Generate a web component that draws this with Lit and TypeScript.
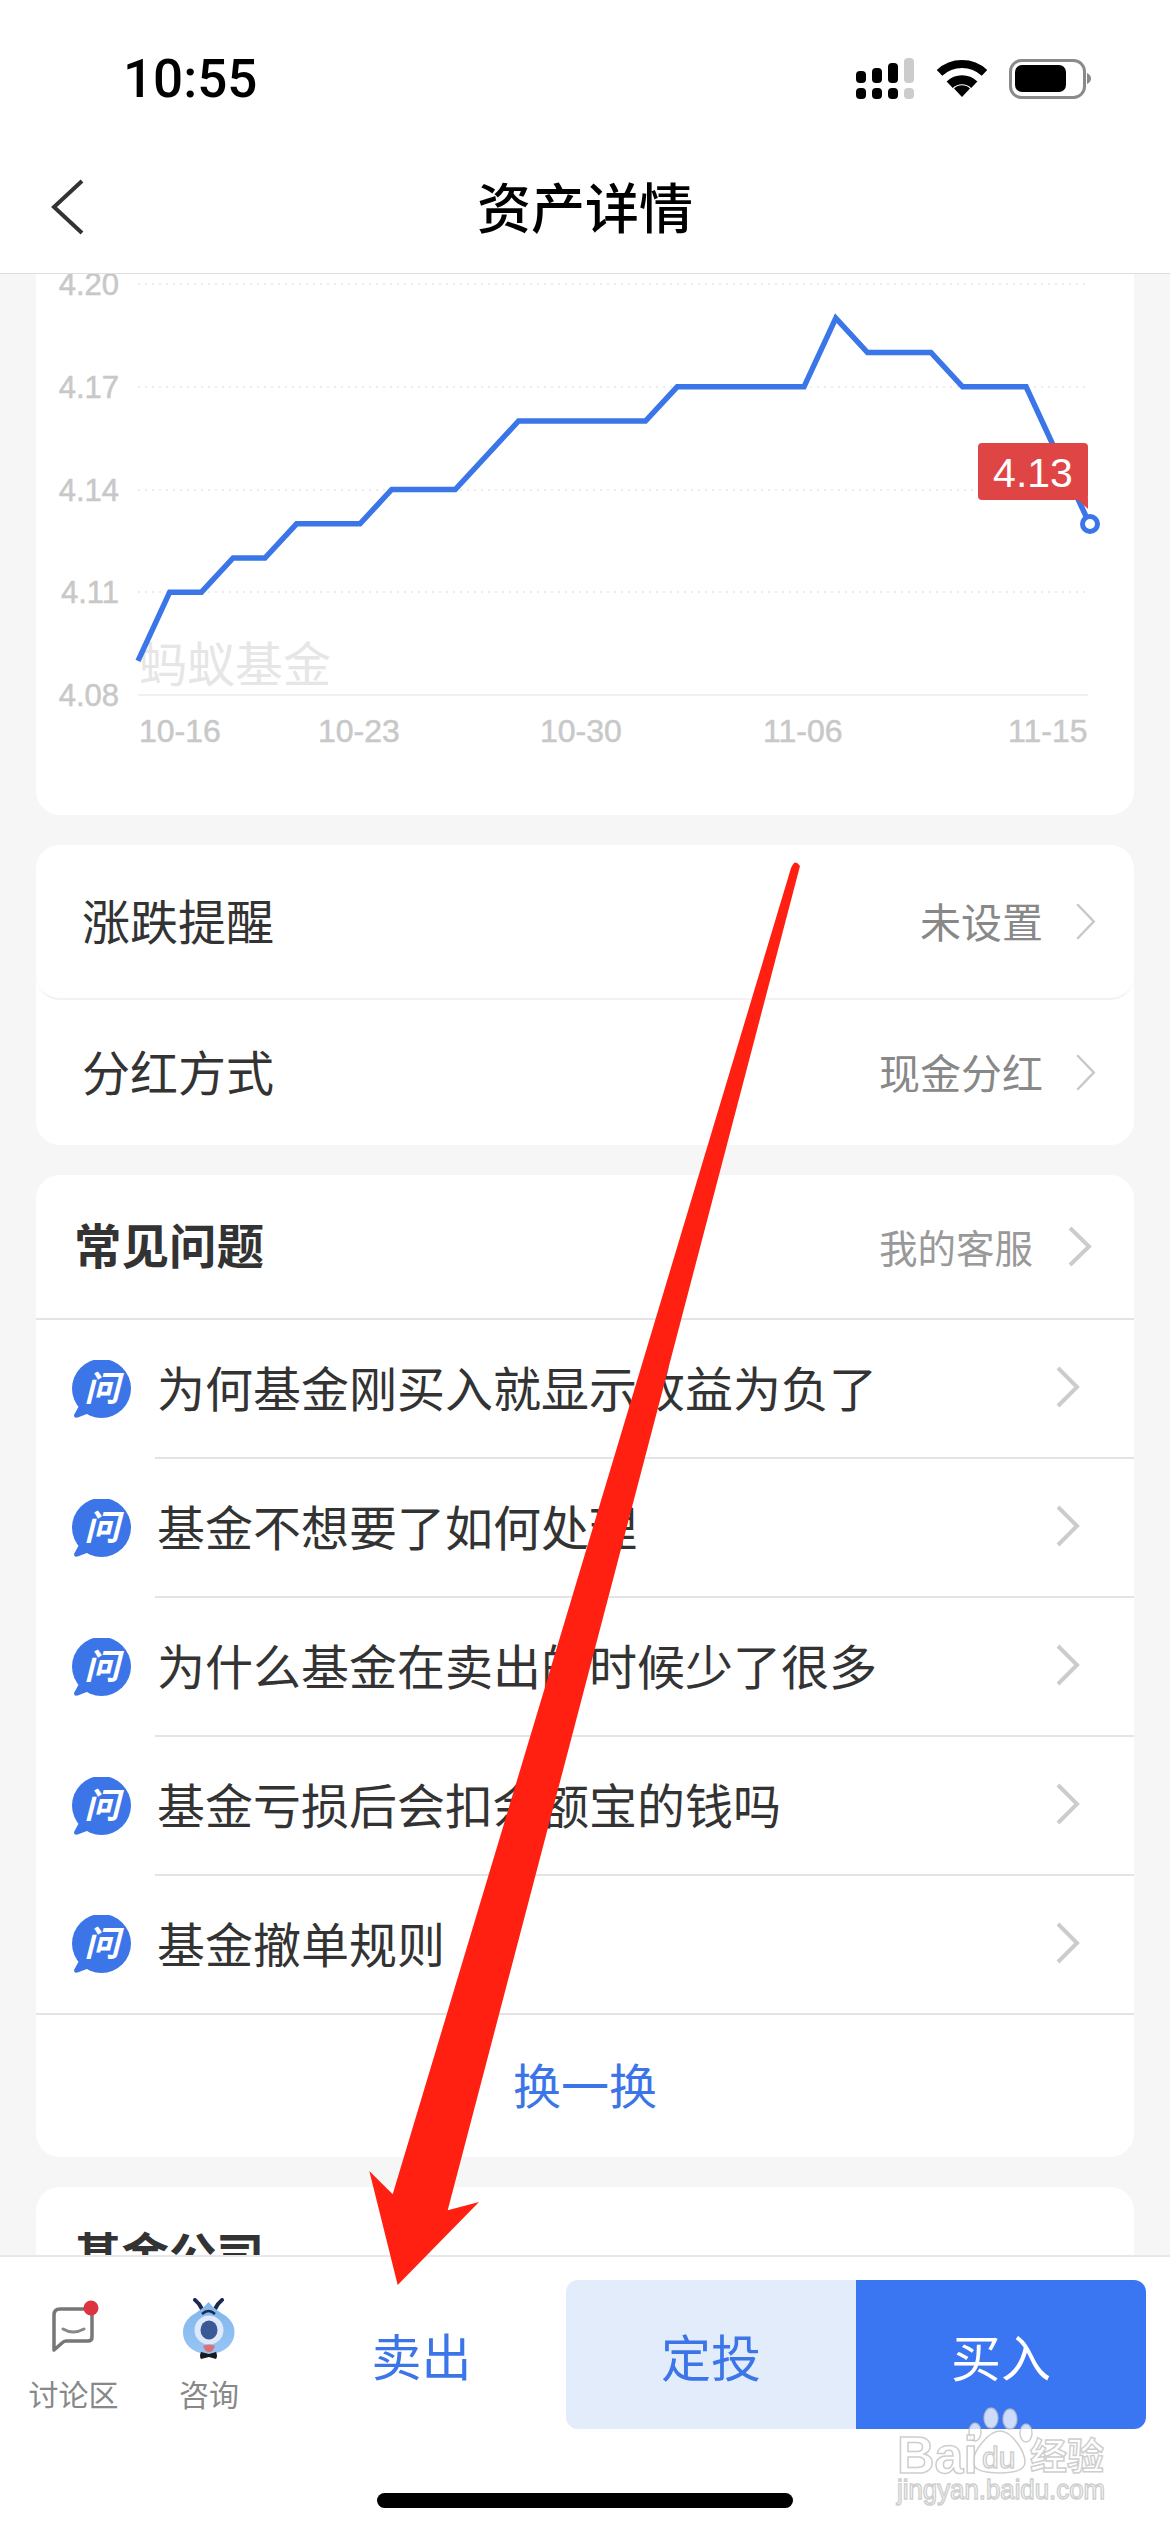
import { LitElement, html, css, svg } from "lit";
import { customElement } from "lit/decorators.js";

const STEP = 951.5 / 30;
const px = (i: number) => 138 + i * STEP;
const py = (v: number) => 695 - (v - 4.08) * (411 / 0.12);
const POINTS: [number, number][] = [
  [0, 4.09], [1, 4.11], [2, 4.11], [3, 4.12], [4, 4.12], [5, 4.13], [7, 4.13], [8, 4.14], [10, 4.14],
  [12, 4.16], [16, 4.16], [17, 4.17], [21, 4.17], [22, 4.19], [23, 4.18], [25, 4.18], [26, 4.17], [28, 4.17], [30, 4.13],
];
const Y_LABELS: [string, number][] = [["4.20", 284], ["4.17", 387], ["4.14", 490], ["4.11", 592], ["4.08", 695]];
const X_LABELS: [string, number][] = [["10-16", 139], ["10-23", 318], ["10-30", 540], ["11-06", 763], ["11-15", 1008]];
const QUESTIONS = [
  "为何基金刚买入就显示收益为负了",
  "基金不想要了如何处理",
  "为什么基金在卖出的时候少了很多",
  "基金亏损后会扣余额宝的钱吗",
  "基金撤单规则",
];

const chevron = (w: number, h: number, sw: number, color: string) => html`
  <svg class="chev" width=${w} height=${h} viewBox="0 0 ${w} ${h}">
    <path d="M${sw / 2 + 1} ${sw / 2} L${w - sw / 2 - 1} ${h / 2} L${sw / 2 + 1} ${h - sw / 2}" fill="none" stroke=${color} stroke-width=${sw}></path>
  </svg>`;

@customElement("app-root")
export class AppRoot extends LitElement {
  static styles = css`
    :host {
      display: flex;
      flex-direction: column;
      position: relative;
      width: 1170px;
      height: 2532px;
      overflow: hidden;
      background: #f6f6f6;
      color: #333;
      font-family: "Noto Sans CJK SC", "Liberation Sans", sans-serif;
    }
    svg { display: block; flex: none; }
    .header { flex: none; height: 274px; background: #fff; border-bottom: 1px solid #dedede; box-sizing: border-box; }
    .status { height: 155px; display: flex; align-items: center; padding: 2px 79px 0 123px; box-sizing: border-box; justify-content: space-between; }
    .time { font: 500 53px/60px Roboto, sans-serif; color: #000; }
    .nav { height: 104px; display: grid; grid-template-columns: 1fr auto 1fr; align-items: center; padding: 0 51px; }
    .title { font-size: 54px; line-height: 70px; font-weight: 500; color: #000; padding-bottom: 2px; }
    .content { flex: 1; min-height: 0; overflow: hidden; padding: 0 36px; display: flex; flex-direction: column; gap: 30px; }
    .card { flex: none; background: #fff; border-radius: 24px; }
    .chart { height: 541px; border-radius: 0 0 24px 24px; overflow: hidden; }
    .chart text { font-family: "Liberation Sans", sans-serif; }
    .setting { height: 155px; display: flex; align-items: center; padding: 0 38px 0 46px; font-size: 48px; box-sizing: border-box; }
    .setting.first { border-bottom: 2px solid #f2f2f2; border-radius: 24px; }
    .setting.second { height: 145px; }
    .setting .label { flex: 1; padding-bottom: 6px; }
    .setting .value { font-size: 41px; color: #888; margin-right: 32px; padding-bottom: 4px; }
    .faq-head { height: 145px; display: flex; align-items: center; padding: 0 42px 0 38px; border-bottom: 2px solid #e4e4e4; box-sizing: border-box; }
    .faq-title { flex: 1; font-size: 47.500px; font-weight: 700; padding-bottom: 6px; }
    .faq-link { font-size: 38.500px; color: #999; margin-right: 34px; padding-bottom: 2px; }
    .q { height: 139px; display: flex; align-items: stretch; padding-left: 36px; box-sizing: border-box; }
    .q.last { border-bottom: 2px solid #e4e4e4; }
    .q-icon { align-self: center; margin-right: 23px; }
    .q-body { flex: 1; display: flex; align-items: center; padding: 0 54px 0 2px; border-bottom: 2px solid #e4e4e4; font-size: 48px; box-sizing: border-box; }
    .q.last .q-body { border-bottom: 0; }
    .q-text { flex: 1; white-space: nowrap; padding-bottom: 6px; }
    .q-body .chev { margin-bottom: 3px; }
    .more { height: 142px; display: flex; align-items: center; justify-content: center; color: #3b75e8; font-size: 48px; padding-bottom: 6px; box-sizing: border-box; }
    .company { height: 200px; padding: 36px 38px; font-size: 47.500px; font-weight: 700; line-height: 60px; box-sizing: border-box; }
    .bottom { flex: none; height: 277px; background: #fff; border-top: 2px solid #e8e8e8; box-sizing: border-box; display: flex; flex-direction: column; }
    .actions { display: flex; align-items: flex-start; padding-left: 30px; }
    .tool { display: flex; flex-direction: column; align-items: center; padding-top: 41px; font-size: 30px; color: #888; white-space: nowrap; }
    .tool span { line-height: 36px; margin-top: 15px; }
    .tool.chat { width: 87px; margin-right: 64px; }
    .tool.ask { width: 56px; }
    .sell { width: 289px; margin-left: 40px; height: 149px; margin-top: 22px; display: flex; align-items: center; justify-content: center; color: #3b75e8; font-size: 50px; }
    .btn { width: 290px; height: 149px; margin-top: 23px; display: flex; align-items: center; justify-content: center; font-size: 50px; }
    .btn.plan { background: #e3ecfb; color: #3b75e8; border-radius: 12px 0 0 12px; }
    .btn.buy { background: #3a75f2; color: #fff; border-radius: 0 12px 12px 0; }
    .home { width: 416px; height: 15px; border-radius: 8px; background: #000; align-self: center; margin-top: auto; margin-bottom: 24px; }
    .overlay { position: absolute; inset: 0; pointer-events: none; }
    .overlay text { font-family: "Liberation Sans", sans-serif; }
    .overlay .cjk { font-family: "Noto Sans CJK SC", sans-serif; }
  `;

  private statusIcons() {
    const bars: [number, number, string][] = [[856, 70, "#000"], [872, 67, "#000"], [888, 62, "#000"], [904, 57, "#ccc"]];
    return html`<svg width="235" height="55" viewBox="856 50 235 55">
      ${bars.map(([x, y, c]) => svg`
        <rect x=${x} y=${y} width="10" height=${82 - y} rx="4" fill=${c}></rect>
        <rect x=${x} y="87" width="10" height="11" rx="4" fill=${c}></rect>`)}
      <path d="M939.5 71.9 A33 33 0 0 1 984.5 71.9" fill="none" stroke="#000" stroke-width="8"></path>
      <path d="M949.7 83.7 A18 18 0 0 1 974.3 83.7" fill="none" stroke="#000" stroke-width="9"></path>
      <path d="M962 96 L954 87.5 A11.5 11.5 0 0 1 970 87.5 Z" fill="#000"></path>
      <rect x="1010.5" y="59.5" width="74" height="37" rx="11" fill="none" stroke="#8a8a8a" stroke-width="3"></rect>
      <rect x="1015" y="64" width="51" height="27" rx="7" fill="#000"></rect>
      <path d="M1087 72 Q1091 74 1091 77.5 Q1091 81 1087 83 Z" fill="#8a8a8a"></path>
    </svg>`;
  }

  private chart() {
    const line = POINTS.map(([i, v]) => `${px(i).toFixed(1)},${py(v).toFixed(1)}`).join(" ");
    return html`<svg width="1098" height="541" viewBox="36 274 1098 541">
      ${Y_LABELS.map(([, y], i) => i < 4
        ? svg`<line x1="138" x2="1088" y1=${y} y2=${y} stroke="#ececec" stroke-width="2" stroke-dasharray="2 5"></line>`
        : svg`<line x1="138" x2="1088" y1=${y} y2=${y} stroke="#f0f0f0" stroke-width="2"></line>`)}
      ${Y_LABELS.map(([t, y]) => svg`<text x="119" y=${y + 11} text-anchor="end" font-size="31" stroke="#c8c8c8" stroke-width="0.5" fill="#c8c8c8">${t}</text>`)}
      ${X_LABELS.map(([t, x]) => svg`<text x=${x} y="742" font-size="32" stroke="#c8c8c8" stroke-width="0.5" fill="#c8c8c8">${t}</text>`)}
      <text x="139" y="682" font-size="48" fill="#e6e6e6" style="font-family:'Noto Sans CJK SC',sans-serif">蚂蚁基金</text>
      <polyline points=${line} fill="none" stroke="#3b76e8" stroke-width="5.5" stroke-linejoin="miter"></polyline>
      <circle cx="1090" cy="524" r="7.5" fill="#fff" stroke="#3b76e8" stroke-width="5"></circle>
      <rect x="978" y="443" width="110" height="57" rx="4" fill="#e04545"></rect>
      <path d="M1076 498 L1088 498 L1088 509 Z" fill="#e04545"></path>
      <text x="1033" y="487" text-anchor="middle" font-size="41" fill="#fff">4.13</text>
    </svg>`;
  }

  private qIcon() {
    return html`<svg class="q-icon" width="60" height="60" viewBox="72 1358 60 60">
      <circle cx="101.500" cy="1386.500" r="29.500" fill="#3b75e8"></circle>
      <path d="M80 1402 L74 1413 Q74 1417 79 1415 L92 1410 Z" fill="#3b75e8"></path>
      <text x="102" y="1399" text-anchor="middle" font-size="35" font-weight="700" font-style="italic" fill="#fff" style="font-family:'Noto Sans CJK SC',sans-serif">问</text>
    </svg>`;
  }

  private chatIcon() {
    return html`<svg width="87" height="62" viewBox="30 2298 87 62">
      <path d="M60 2309 L88 2309 Q92 2309 92 2313 L92 2337 Q92 2341 88 2341 L66 2341 Q64 2341 62 2343 L54 2350 L54 2315 Q54 2309 60 2309 Z" fill="none" stroke="#777" stroke-width="3.5" stroke-linejoin="round"></path>
      <path d="M63 2329 Q73 2335 84 2329" fill="none" stroke="#888" stroke-width="3" stroke-linecap="round"></path>
      <circle cx="91" cy="2308" r="7.5" fill="#dd3540"></circle>
    </svg>`;
  }

  private mascot() {
    return html`<svg width="56" height="62" viewBox="181 2298 56 62">
      <defs>
        <linearGradient id="drop" x1="0" y1="0" x2="0" y2="1">
          <stop offset="0" stop-color="#7fb6ec"></stop>
          <stop offset="1" stop-color="#98c4f4"></stop>
        </linearGradient>
      </defs>
      <path d="M202 2309 Q199 2303 195 2300" fill="none" stroke="#1c2a52" stroke-width="4" stroke-linecap="round"></path>
      <path d="M215 2309 Q218 2303 222 2300" fill="none" stroke="#1c2a52" stroke-width="4" stroke-linecap="round"></path>
      <path d="M208.500 2302 Q214 2309 226 2316 Q234.500 2323 234.500 2332 C234.500 2346 222 2354 208.500 2354 C195 2354 183 2346 183 2332 Q183 2323 191 2316 Q203 2309 208.500 2302 Z" fill="url(#drop)"></path>
      <path d="M202 2314 Q208.500 2308 215 2314" fill="none" stroke="#1c2a52" stroke-width="2.500"></path>
      <circle cx="209" cy="2330" r="14.500" fill="#dfe9fb"></circle>
      <ellipse cx="209" cy="2330" rx="8.500" ry="9.500" fill="#3a5a95"></ellipse>
      <path d="M203 2346 Q209 2343 215 2346 Q213 2352 209 2352 Q205 2352 203 2346 Z" fill="#d9707a"></path>
      <path d="M201 2352 L209 2354 L216 2352 Q218 2356 216 2359 L209 2357 L201 2359 Q199 2356 201 2352 Z" fill="#1a1a1f"></path>
    </svg>`;
  }

  private overlay() {
    const wm = "fill:rgba(255,255,255,.75);stroke:rgba(190,190,190,.75);stroke-width:1.500";
    return html`<svg class="overlay" width="1170" height="2532" viewBox="0 0 1170 2532">
      <path d="M791 868 Q795 858 800 866 L447.700 2210.300 L479 2202 L397.700 2285 L369.300 2171 L392.700 2194.300 Z" fill="#ff2012"></path>
      <g style=${wm}>
        <ellipse cx="991" cy="2418" rx="7" ry="10"></ellipse>
        <ellipse cx="1010" cy="2419" rx="7" ry="10"></ellipse>
        <ellipse cx="975" cy="2432" rx="6" ry="9"></ellipse>
        <ellipse cx="1026" cy="2433" rx="6" ry="9"></ellipse>
        <path d="M1000 2431 C1012 2431 1025 2452 1025 2462 C1025 2470 1016 2473 1000 2473 C984 2473 973 2470 973 2462 C973 2452 988 2431 1000 2431 Z"></path>
      </g>
      <text x="897" y="2473" font-size="52" font-weight="700" style=${wm}>Bai</text>
      <text x="982" y="2468" font-size="30" style=${wm}>du</text>
      <text class="cjk" x="1030" y="2470" font-size="37" font-weight="700" style=${wm}>经验</text>
      <text x="897" y="2499" font-size="28" textLength="208" lengthAdjust="spacingAndGlyphs" style=${wm}>jingyan.baidu.com</text>
    </svg>`;
  }

  render() {
    return html`
      <div class="header">
        <div class="status"><div class="time">10:55</div>${this.statusIcons()}</div>
        <div class="nav">
          <svg width="33" height="56" viewBox="0 0 33 56"><path d="M31 2 L3 28 L31 54" fill="none" stroke="#333" stroke-width="4"></path></svg>
          <div class="title">资产详情</div>
          <div></div>
        </div>
      </div>
      <div class="content">
        <div class="card chart">${this.chart()}</div>
        <div class="card">
          <div class="setting first"><div class="label">涨跌提醒</div><div class="value">未设置</div>${chevron(21, 37, 2.5, "#c8c8c8")}</div>
          <div class="setting second"><div class="label">分红方式</div><div class="value">现金分红</div>${chevron(21, 37, 2.5, "#c8c8c8")}</div>
        </div>
        <div class="card">
          <div class="faq-head"><div class="faq-title">常见问题</div><div class="faq-link">我的客服</div>${chevron(25, 41, 4, "#cccccc")}</div>
          ${QUESTIONS.map((q, i) => html`
            <div class="q ${i === QUESTIONS.length - 1 ? "last" : ""}">
              ${this.qIcon()}
              <div class="q-body"><div class="q-text">${q}</div>${chevron(25, 42, 4, "#cccccc")}</div>
            </div>`)}
          <div class="more">换一换</div>
        </div>
        <div class="card company">基金公司</div>
      </div>
      <div class="bottom">
        <div class="actions">
          <div class="tool chat">${this.chatIcon()}<span>讨论区</span></div>
          <div class="tool ask">${this.mascot()}<span>咨询</span></div>
          <div class="sell">卖出</div>
          <div class="btn plan">定投</div>
          <div class="btn buy">买入</div>
        </div>
        <div class="home"></div>
      </div>
      ${this.overlay()}
    `;
  }
}
